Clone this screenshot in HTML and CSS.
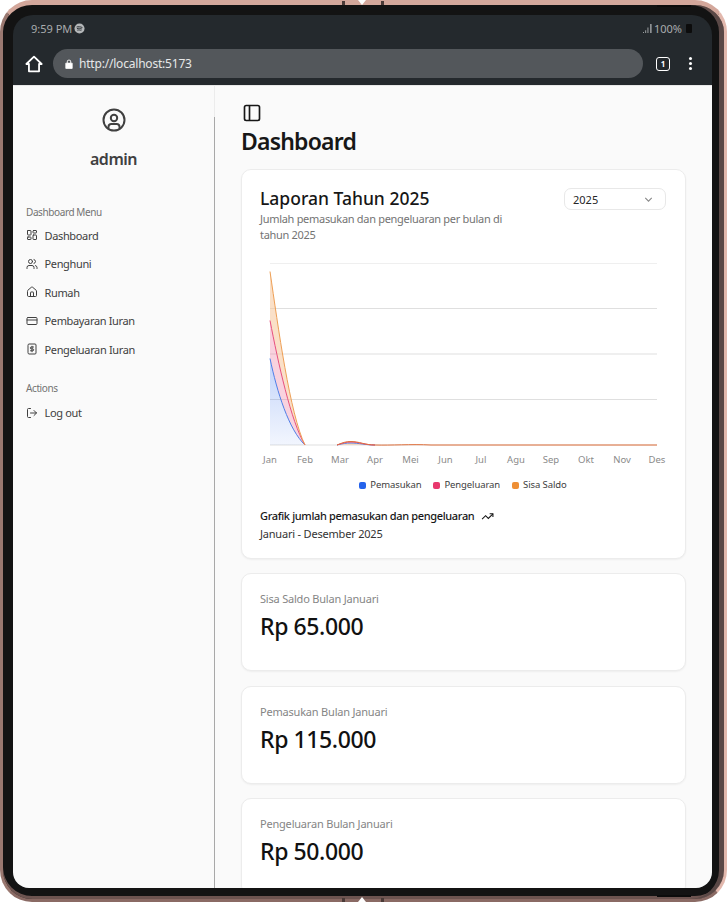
FILE: index.html
```html
<!DOCTYPE html>
<html lang="id">
<head>
    <meta charset="UTF-8">
    <meta name="viewport" content="width=device-width, initial-scale=1.0">
    <title>Dashboard</title>
    <link rel="stylesheet" href="styles.css">
</head>
<body>
    <div class="phone">
        <span class="hinge hinge-top"></span>
        <span class="hinge hinge-bottom"></span>
        <span class="notch notch-top"></span>
        <span class="notch notch-bottom"></span>
        <span class="gap gap-top"></span>
        <span class="gap gap-bottom"></span>
        <div class="screen">
            <div class="status-bar">
                <div class="status-left">
                    <span>9:59 PM</span>
                    <svg class="spotify" viewBox="0 0 12 12"><circle cx="6" cy="6" r="5.5" fill="#b4b7b9"/><path d="M2.800 4.400c2-.6 4.400-.4 6.400.6M3.200 6.100c1.800-.5 3.800-.3 5.400.5M3.600 7.800c1.400-.4 3-.3 4.400.4" fill="none" stroke="#24292d" stroke-width="1"/></svg>
                </div>
                <div class="status-right">
                    <svg class="signal" viewBox="0 0 10 10"><path d="M0 9h1v1H0zM2.500 7h1v3h-1zM5 4h1v6H5zM8 0h1.500v10H8z" fill="#a9acae"/></svg>
                    <span>100%</span>
                    <span class="battery"></span>
                </div>
            </div>
            <div class="browser-bar">
                <svg class="home-icon" viewBox="0 0 16 16"><path d="M8 1.500 1.200 8H3.500v6.500h9V8h2.300z" fill="none" stroke="#fff" stroke-width="1.600" stroke-linejoin="round"/></svg>
                <div class="url-box">
                    <svg class="lock" viewBox="0 0 10 12"><path d="M1 5h8v6.500H1zM2.800 5V3.200a2.200 2.200 0 0 1 4.400 0V5" fill="#fff" stroke="#fff" stroke-width="1"/><path d="M3.500 4.500V3.200a1.500 1.500 0 0 1 3 0v1.300z" fill="#53575b"/></svg>
                    <span>http://localhost:5173</span>
                </div>
                <span class="tab-count">1</span>
                <span class="dots"><i></i><i></i><i></i></span>
            </div>
            <div class="app">
                <aside class="sidebar">
                    <div class="profile">
                        <svg class="profile-icon" viewBox="0 0 24 24" fill="none" stroke="#404040" stroke-width="2" stroke-linecap="round" stroke-linejoin="round"><circle cx="12" cy="12" r="10.500"/><circle cx="12" cy="10" r="3.200"/><path d="M6.500 19.500v-.8a2.800 2.800 0 0 1 2.800-2.700h5.400a2.800 2.800 0 0 1 2.800 2.700v.8"/></svg>
                        <div class="profile-name">admin</div>
                    </div>
                    <div class="menu-label">Dashboard Menu</div>
                    <nav class="menu">
                        <a class="menu-item">
                            <svg viewBox="0 0 24 24"><rect x="3" y="3" width="7" height="9" rx="1"/><rect x="14" y="3" width="7" height="5" rx="1"/><rect x="14" y="12" width="7" height="9" rx="1"/><rect x="3" y="16" width="7" height="5" rx="1"/></svg>
                            Dashboard
                        </a>
                        <a class="menu-item">
                            <svg viewBox="0 0 24 24"><path d="M16 21v-2a4 4 0 0 0-4-4H6a4 4 0 0 0-4 4v2"/><circle cx="9" cy="7" r="4"/><path d="M22 21v-2a4 4 0 0 0-3-3.870M16 3.130a4 4 0 0 1 0 7.750"/></svg>
                            Penghuni
                        </a>
                        <a class="menu-item">
                            <svg viewBox="0 0 24 24"><path d="M15 21v-8a1 1 0 0 0-1-1h-4a1 1 0 0 0-1 1v8"/><path d="M3 10a2 2 0 0 1 .7-1.500l7-6a2 2 0 0 1 2.600 0l7 6a2 2 0 0 1 .7 1.500v9a2 2 0 0 1-2 2H5a2 2 0 0 1-2-2z"/></svg>
                            Rumah
                        </a>
                        <a class="menu-item">
                            <svg viewBox="0 0 24 24"><rect x="2" y="5" width="20" height="14" rx="2"/><path d="M2 10h20"/></svg>
                            Pembayaran Iuran
                        </a>
                        <a class="menu-item">
                            <svg viewBox="0 0 24 24"><path d="M4 4a2 2 0 0 1 2-2h12a2 2 0 0 1 2 2v16a2 2 0 0 1-2 2H6a2 2 0 0 1-2-2z"/><path d="M15 8h-4.500a1.800 1.800 0 0 0 0 3.800h3a1.800 1.800 0 0 1 0 3.700H9M12 17.500v-11"/></svg>
                            Pengeluaran Iuran
                        </a>
                    </nav>
                    <div class="menu-label actions-label">Actions</div>
                    <nav class="menu">
                        <a class="menu-item">
                            <svg viewBox="0 0 24 24"><path d="M9 21H5a2 2 0 0 1-2-2V5a2 2 0 0 1 2-2h4"/><path d="m16 17 5-5-5-5M21 12H9"/></svg>
                            Log out
                        </a>
                    </nav>
                </aside>
                <main class="content">
                    <svg class="panel-icon" viewBox="0 0 24 24"><rect x="3" y="3" width="18" height="18" rx="2"/><path d="M9 3v18"/></svg>
                    <h1>Dashboard</h1>

                    <section class="card chart-card">
                        <div class="chart-head">
                            <div>
                                <h2>Laporan Tahun 2025</h2>
                                <p class="chart-desc">Jumlah pemasukan dan pengeluaran per bulan di tahun 2025</p>
                            </div>
                            <div class="year-select">
                                <span>2025</span>
                                <svg viewBox="0 0 24 24"><path d="m6 9 6 6 6-6"/></svg>
                            </div>
                        </div>
                        <svg class="chart" viewBox="0 0 405 205">
                            <defs>
                                <linearGradient id="fadeBlue" x1="0" y1="0" x2="0" y2="1">
                                    <stop offset="0" stop-color="#2563eb" stop-opacity="0.28"/>
                                    <stop offset="1" stop-color="#2563eb" stop-opacity="0.06"/>
                                </linearGradient>
                            </defs>
                            <path class="grid-top" d="M9 1.500H396"/>
                            <path class="grid" d="M9 46.500H396M9 92H396M9 137.500H396M9 183H396"/>
                            <!-- stacked bands, each one sits on the one below -->
                            <path d="M9 9.500C17 64 29 153 44 183C30 160 17 100 9 58.500Z" fill="#f6c79b" fill-opacity="0.55"/>
                            <path d="M9 58.500C17 100 30 160 44 183C28 168 16 130 9 96.500Z" fill="#ee7fa0" fill-opacity="0.35"/>
                            <path d="M9 96.500C16 130 28 168 44 183H9Z" fill="url(#fadeBlue)"/>
                            <path d="M76 183C82 180.500 85 179.500 90 179.500C98 179.500 104 183 114 183Z" fill="#f6c79b" fill-opacity="0.6"/>
                            <path class="line" d="M9 96.500C16 130 28 168 44 183" stroke="#4f7fe8"/>
                            <path class="line" d="M9 58.500C17 100 30 160 44 183" stroke="#e8507f"/>
                            <path class="line" d="M9 9.500C17 64 29 153 44 183" stroke="#ee9f55"/>
                            <path class="line" d="M76 183C82 181.500 85 181 90 181C98 181 104 183 114 183" stroke="#4f7fe8"/>
                            <path class="line" d="M76 183C82 181 85 180 90 180C98 180 104 183 114 183" stroke="#e8507f"/>
                            <path class="line" d="M76 183C82 180.500 85 179.500 90 179.500C98 179.500 104 183 114 183C130 183.500 150 182 170 183H396" stroke="#e0703c"/>
                            <g class="ticks">
                                <text x="9" y="201">Jan</text>
                                <text x="44" y="201">Feb</text>
                                <text x="79" y="201">Mar</text>
                                <text x="114" y="201">Apr</text>
                                <text x="149.500" y="201">Mei</text>
                                <text x="184.500" y="201">Jun</text>
                                <text x="220" y="201">Jul</text>
                                <text x="255" y="201">Agu</text>
                                <text x="290" y="201">Sep</text>
                                <text x="325" y="201">Okt</text>
                                <text x="361" y="201">Nov</text>
                                <text x="396" y="201">Des</text>
                            </g>
                        </svg>
                        <div class="legend">
                            <span class="legend-item"><i class="dot-blue"></i>Pemasukan</span>
                            <span class="legend-item"><i class="dot-pink"></i>Pengeluaran</span>
                            <span class="legend-item"><i class="dot-orange"></i>Sisa Saldo</span>
                        </div>
                        <div class="chart-foot">
                            <div class="foot-title">
                                Grafik jumlah pemasukan dan pengeluaran
                                <svg viewBox="0 0 24 24"><path d="m22 7-8.500 8.500-5-5L2 17"/><path d="M16 7h6v6"/></svg>
                            </div>
                            <div class="foot-sub">Januari - Desember 2025</div>
                        </div>
                    </section>

                    <section class="card stat-card">
                        <div class="stat-label">Sisa Saldo Bulan Januari</div>
                        <div class="stat-value">Rp 65.000</div>
                    </section>
                    <section class="card stat-card">
                        <div class="stat-label">Pemasukan Bulan Januari</div>
                        <div class="stat-value">Rp 115.000</div>
                    </section>
                    <section class="card stat-card">
                        <div class="stat-label">Pengeluaran Bulan Januari</div>
                        <div class="stat-value">Rp 50.000</div>
                    </section>
                </main>
            </div>
        </div>
    </div>
</body>
</html>
```

FILE: styles.css
```css
html, body {
    margin: 0;
    padding: 0;
    background: #fff;
}
body {
    font-family: "Noto Sans", sans-serif;
    width: 727px;
    height: 902px;
    overflow: hidden;
}
.phone {
    position: relative;
    box-sizing: border-box;
    width: 727px;
    height: 902px;
    padding: 10px 12px 11px 10px;
    background: #131313;
    border-style: solid;
    border-width: 5px 3px 3px 3px;
    border-color: #d3a79b #e2b8ad #8a6a64 #9a7870;
    border-radius: 32px;
    box-shadow: inset -5px 0 0 #5a4846, inset 0 -3px 0 #6d5450;
}
.hinge {
    position: absolute;
    left: 339px;
    box-sizing: border-box;
    width: 42px;
    height: 4px;
    border-left: 3px solid #4a3a37;
    border-right: 3px solid #4a3a37;
}
.hinge-top { top: -4px; }
.hinge-bottom { bottom: -3px; }
.notch {
    position: absolute;
    left: 654px;
    width: 34px;
    height: 2px;
    background: #0c0c0c;
}
.notch-top { top: 0; }
.notch-bottom { bottom: 2px; }
.gap {
    position: absolute;
    left: 355px;
    width: 8px;
    height: 5px;
    background: #fff;
}
.gap-top {
    top: -5px;
    clip-path: polygon(0 0, 100% 0, 50% 100%);
}
.gap-bottom {
    bottom: -3px;
    clip-path: polygon(50% 0, 100% 100%, 0 100%);
}
.screen {
    display: flex;
    flex-direction: column;
    height: 873px;
    width: 699px;
    border-radius: 20px 20px 16px 16px;
    overflow: hidden;
    background: #24292d;
}
.status-bar {
    display: flex;
    justify-content: space-between;
    align-items: center;
    height: 27px;
    padding: 0 20px 0 18px;
    flex-shrink: 0;
    font-size: 11px;
    color: #a9acae;
}
.status-left, .status-right {
    display: flex;
    align-items: center;
    gap: 2px;
}
.spotify {
    width: 11px;
    height: 11px;
}
.signal {
    width: 9px;
    height: 9px;
}
.battery {
    width: 6px;
    height: 9px;
    margin-left: 2px;
    background: #0c0c0c;
    border-radius: 1px;
}
.browser-bar {
    display: flex;
    align-items: center;
    height: 43px;
    flex-shrink: 0;
    padding: 0 20px 0 12px;
}
.home-icon {
    width: 18px;
    height: 18px;
    margin-right: 10px;
}
.url-box {
    flex: 1;
    display: flex;
    align-items: center;
    gap: 6px;
    height: 29px;
    padding: 0 12px;
    border-radius: 15px;
    background: #53575b;
    color: #e6e7e8;
    font-size: 12px;
    letter-spacing: -0.2px;
}
.lock {
    width: 8px;
    height: 10px;
}
.tab-count {
    box-sizing: border-box;
    width: 14px;
    height: 14px;
    margin-left: 13px;
    border: 1.5px solid #fff;
    border-radius: 3px;
    color: #fff;
    font-size: 8px;
    font-weight: 700;
    line-height: 11px;
    text-align: center;
}
.dots {
    display: flex;
    flex-direction: column;
    gap: 2px;
    margin-left: 19px;
}
.dots i {
    width: 3px;
    height: 3px;
    border-radius: 50%;
    background: #fff;
}
.app {
    flex: 1;
    display: flex;
    min-height: 0;
    background: #fafafa;
    border-top: 1px solid #e8e8e8;
}
.sidebar {
    position: relative;
    box-sizing: border-box;
    width: 202px;
    flex-shrink: 0;
    padding: 22px 13px 0;
    border-right: 1px solid #a8a8a8;
    color: #404040;
}
.sidebar::before {
    content: "";
    position: absolute;
    top: 0;
    right: -1px;
    width: 1px;
    height: 31px;
    background: #ececec;
}
.profile {
    text-align: center;
    margin-bottom: 35px;
}
.profile-icon {
    display: block;
    width: 24px;
    height: 24px;
    margin: 0 auto 16px;
}
.profile-name {
    font-size: 16px;
    font-weight: 600;
    line-height: 22px;
    letter-spacing: -0.5px;
    color: #404040;
}
.menu-label {
    margin-bottom: 2px;
    font-size: 10px;
    line-height: 14px;
    letter-spacing: -0.4px;
    color: #737373;
}
.actions-label {
    margin-top: 17px;
    margin-bottom: 4px;
}
.menu {
    display: flex;
    flex-direction: column;
}
.menu-item {
    display: flex;
    align-items: center;
    gap: 6.500px;
    height: 28.500px;
    font-size: 11px;
    letter-spacing: -0.35px;
    color: #404040;
}
.menu-item svg {
    width: 12px;
    height: 12px;
    fill: none;
    stroke: #404040;
    stroke-width: 2;
    stroke-linecap: round;
    stroke-linejoin: round;
    flex-shrink: 0;
}
.content {
    flex: 1;
    min-width: 0;
    overflow: hidden;
    padding: 17px 26px 0;
}
.panel-icon {
    display: block;
    width: 20px;
    height: 20px;
    margin-left: 1px;
    fill: none;
    stroke: #171717;
    stroke-width: 2;
}
h1 {
    margin: 2px 0 12px 0;
    font-size: 23px;
    line-height: 32px;
    font-weight: 600;
    letter-spacing: -0.8px;
    color: #171717;
}
.card {
    box-sizing: border-box;
    background: #fff;
    border: 1px solid #ececec;
    border-radius: 10px;
    box-shadow: 0 1px 2px rgba(0, 0, 0, 0.05);
    margin-bottom: 14.500px;
}
.chart-card {
    height: 389.500px;
    padding: 18px 19px 0 18px;
}
.chart-head {
    display: flex;
    justify-content: space-between;
}
h2 {
    margin: 0;
    font-size: 17.500px;
    line-height: 20px;
    font-weight: 500;
    color: #171717;
}
.chart-desc {
    width: 250px;
    margin: 3px 0 0;
    font-size: 11px;
    line-height: 16px;
    letter-spacing: -0.3px;
    color: #737373;
}
.year-select {
    box-sizing: border-box;
    display: flex;
    justify-content: space-between;
    align-items: center;
    width: 102px;
    height: 22px;
    padding: 0 10px 0 8px;
    border: 1px solid #e8e8e8;
    border-radius: 7px;
    font-size: 11px;
    color: #262626;
}
.year-select svg {
    width: 13px;
    height: 13px;
    fill: none;
    stroke: #888;
    stroke-width: 2;
}
.chart {
    display: block;
    width: 405px;
    height: 205px;
    margin: 19px 0 0 1px;
}
.grid-top, .grid {
    fill: none;
    stroke-width: 1;
}
.grid-top { stroke: #efefef; }
.grid { stroke: #dfdfdf; }
.line {
    fill: none;
    stroke-width: 1;
}
.ticks text {
    font-size: 9.500px;
    fill: #8a8a8a;
    text-anchor: middle;
}
.legend {
    display: flex;
    justify-content: center;
    gap: 12px;
    margin-top: 11px;
    font-size: 9.500px;
    line-height: 14px;
    letter-spacing: -0.1px;
    color: #404040;
}
.legend-item {
    display: flex;
    align-items: center;
    gap: 4px;
}
.legend-item i {
    width: 7px;
    height: 7px;
    border-radius: 2px;
}
.dot-blue { background: #2563eb; }
.dot-pink { background: #e8386d; }
.dot-orange { background: #ee8f35; }
.chart-foot {
    margin-top: 15px;
    font-size: 11px;
    line-height: 18px;
}
.foot-title {
    display: flex;
    align-items: center;
    gap: 7px;
    font-weight: 500;
    letter-spacing: -0.35px;
    color: #171717;
}
.foot-title svg {
    width: 13px;
    height: 13px;
    fill: none;
    stroke: #171717;
    stroke-width: 2;
}
.foot-sub {
    letter-spacing: -0.2px;
    color: #333;
}
.stat-card {
    height: 98px;
    padding: 17px 19px 0 18px;
}
.stat-label {
    font-size: 11px;
    line-height: 16px;
    letter-spacing: -0.2px;
    color: #858585;
}
.stat-value {
    margin-top: 3px;
    font-size: 23px;
    line-height: 32px;
    font-weight: 500;
    letter-spacing: -0.4px;
    color: #111;
}
```
